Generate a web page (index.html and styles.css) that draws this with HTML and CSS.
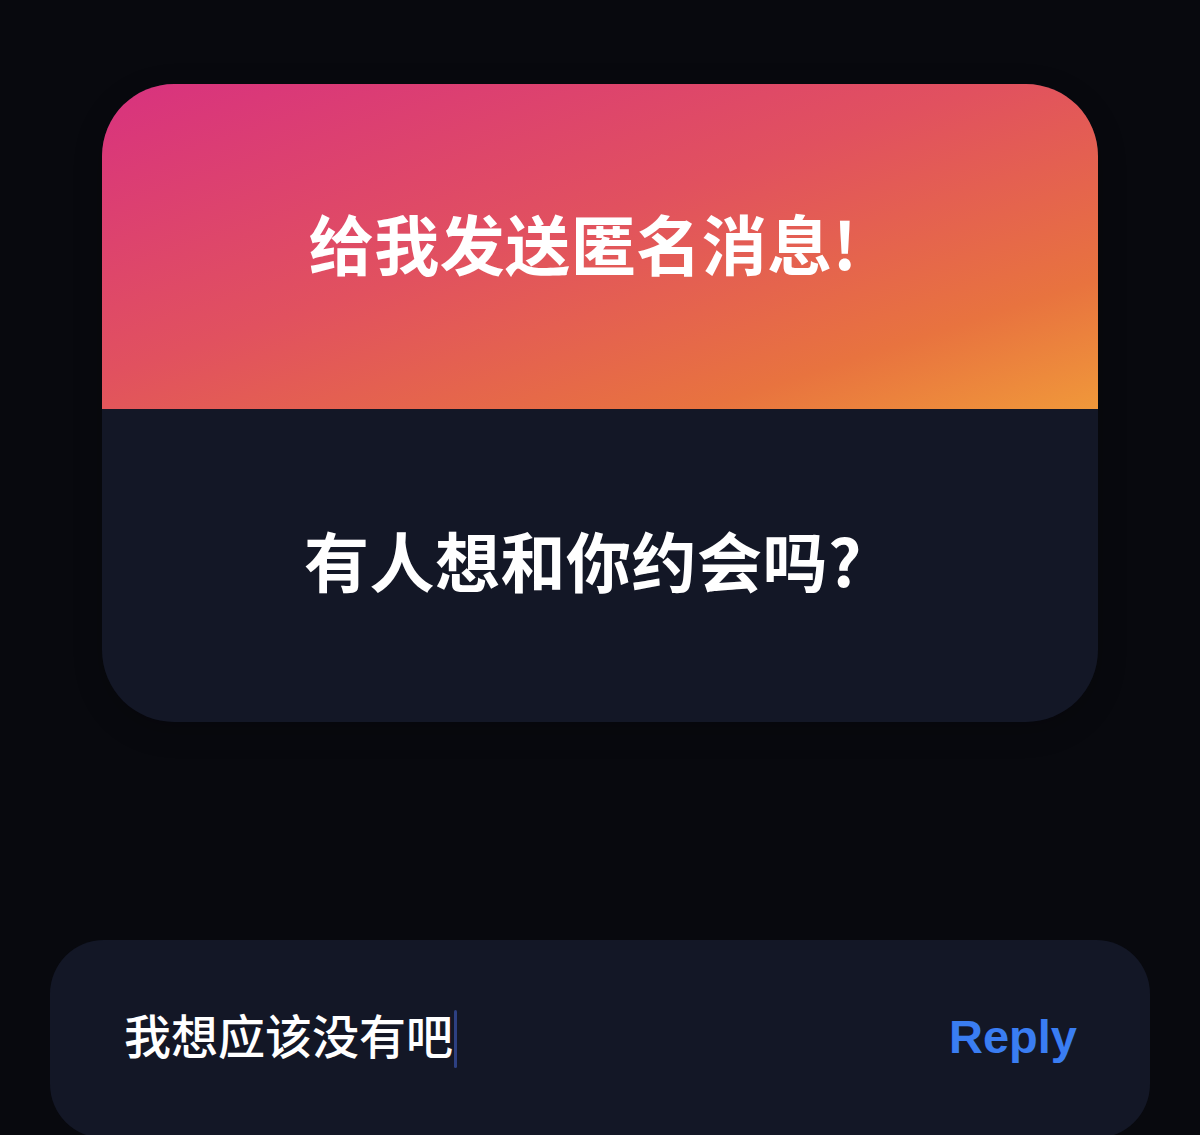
FILE: index.html
```html
<!DOCTYPE html>
<html lang="zh-CN">
<head>
<meta charset="utf-8">
<title>匿名消息</title>
<link rel="stylesheet" href="styles.css">
</head>
<body>
  <main class="page">
    <section class="card">
      <div class="card-head">
        <h1 class="card-title">给我发送匿名消息!</h1>
      </div>
      <div class="card-body">
        <p class="card-question">有人想和你约会吗?</p>
      </div>
    </section>
    <div class="reply-bar">
      <div class="reply-input"><span class="reply-text">我想应该没有吧</span><span class="caret"></span></div>
      <button class="reply-btn" type="button">Reply</button>
    </div>
  </main>
</body>
</html>
```

FILE: styles.css
```css
html, body {
  margin: 0;
  padding: 0;
  background: #08090e;
  height: 100%;
  overflow: hidden;
}

body {
  font-family: "Noto Sans CJK SC", "Noto Sans", "Liberation Sans", sans-serif;
  color: #ffffff;
}

.page {
  display: flex;
  flex-direction: column;
  align-items: flex-start;
  padding-top: 84px;
}

.card {
  margin-left: 102px;
  width: 996px;
  border-radius: 72px;
  overflow: hidden;
  background: #131726;
  box-shadow: 0 8px 30px rgba(0, 0, 0, 0.2);
}

.card-head {
  height: 325px;
  display: flex;
  align-items: center;
  justify-content: center;
  padding-bottom: 8px;
  box-sizing: border-box;
  background: linear-gradient(to bottom right, #d8327f 0%, #e1515f 45%, #e8733f 80%, #f0983a 100%);
}

.card-title,
.card-question {
  margin: 0;
  font-size: 65px;
  font-weight: 700;
  line-height: 1;
  letter-spacing: 0.5px;
  padding-right: 34px;
}

.card-body {
  height: 313px;
  display: flex;
  align-items: center;
  justify-content: center;
  padding-bottom: 12px;
  box-sizing: border-box;
}

.reply-bar {
  margin-top: 218px;
  margin-left: 50px;
  width: 1100px;
  height: 198px;
  box-sizing: border-box;
  border-radius: 54px;
  background: #131726;
  display: flex;
  align-items: center;
  justify-content: space-between;
  padding: 0 73px 12px 74px;
}

.reply-input {
  display: flex;
  align-items: center;
}

.reply-text {
  font-size: 47px;
  font-weight: 500;
  line-height: 1;
  color: #ffffff;
}

.caret {
  display: inline-block;
  width: 3px;
  height: 58px;
  margin-left: 1px;
  margin-top: 12px;
  border-radius: 2px;
  background: #2d4082;
}

.reply-btn {
  border: 0;
  background: none;
  padding: 0 0 0 0;
  margin-top: 6px;
  font-family: "Liberation Sans", "Noto Sans", sans-serif;
  font-size: 47px;
  font-weight: 700;
  color: #3a7df2;
  line-height: 1;
}
```
